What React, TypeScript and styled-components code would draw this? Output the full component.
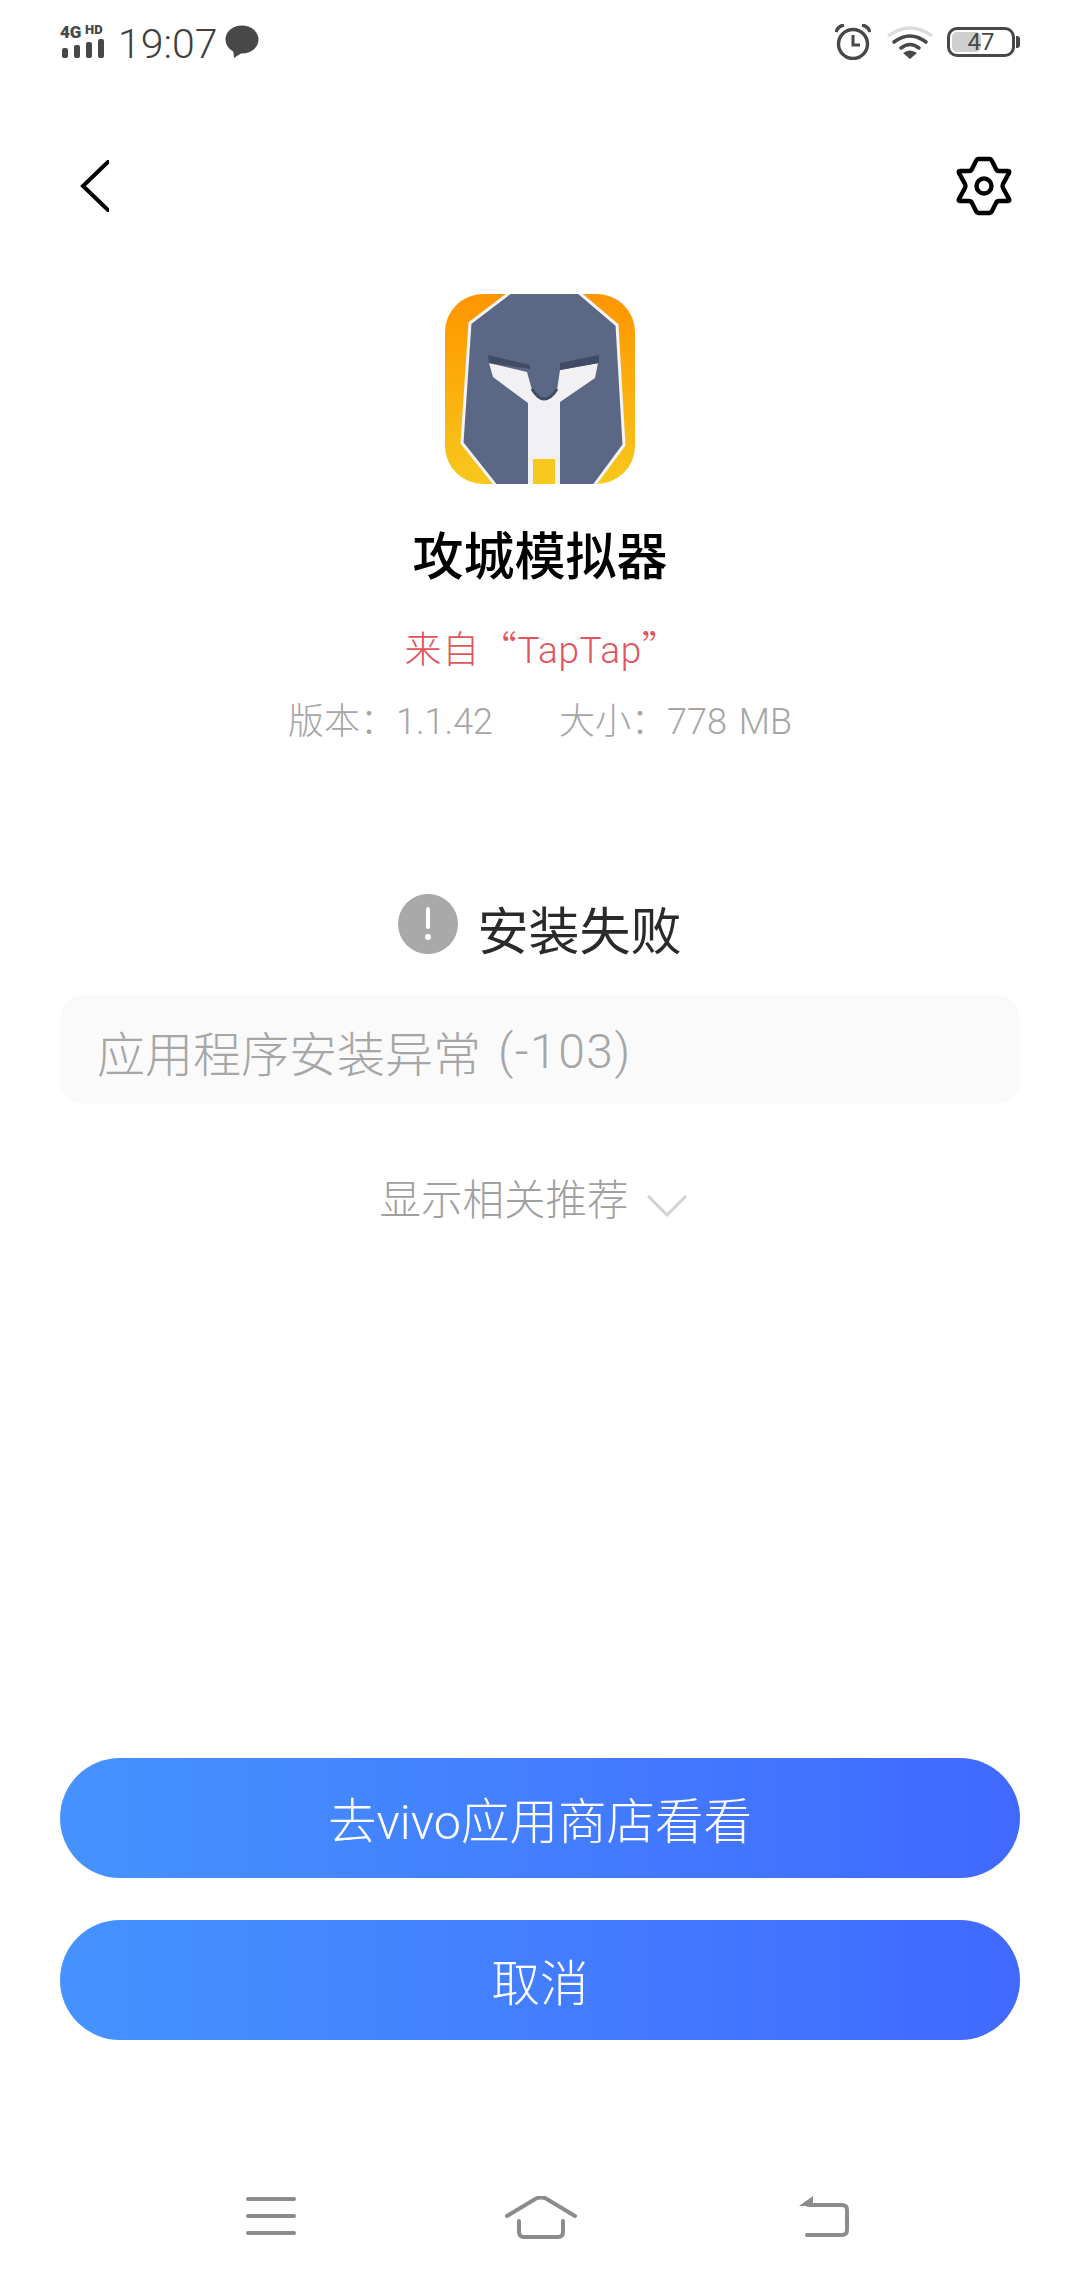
import React from 'react';
import styled, { createGlobalStyle } from 'styled-components';

const GlobalStyle = createGlobalStyle`
  html, body {
    margin: 0;
    padding: 0;
    background: #fff;
  }
  * {
    box-sizing: border-box;
  }
`;

const FONT = `"Roboto", "Noto Sans CJK SC", sans-serif`;

const Page = styled.div`
  width: 1080px;
  height: 2280px;
  display: flex;
  flex-direction: column;
  font-family: ${FONT};
  background: #fff;
  overflow: hidden;
`;

const StatusBar = styled.div`
  height: 84px;
  padding: 22px 60px 0;
  display: flex;
  justify-content: space-between;
  align-items: flex-start;
`;

const StatusLeft = styled.div`
  display: flex;
  align-items: center;
  height: 40px;
`;

const StatusRight = styled.div`
  display: flex;
  align-items: center;
  height: 40px;
  gap: 14px;
`;

const Clock = styled.span`
  font-size: 41px;
  font-weight: 300;
  line-height: 40px;
  color: #404040;
  margin: 4px 7px 0 8px;
`;

const BatteryBox = styled.div`
  position: relative;
  width: 68px;
  height: 30px;
  border: 3px solid #484848;
  border-radius: 10px;
  display: flex;
  align-items: center;
  justify-content: center;
  font-size: 24px;
  color: #484848;
  overflow: hidden;
`;

const BatteryFill = styled.div`
  position: absolute;
  left: 2px;
  top: 2px;
  bottom: 2px;
  background: #cfcfcf;
  border-radius: 5px;
`;

const BatteryText = styled.span`
  position: relative;
  line-height: 24px;
`;

const BatteryTip = styled.div`
  width: 4px;
  height: 12px;
  background: #484848;
  border-radius: 0 3px 3px 0;
  margin-left: 1px;
`;

const Battery = styled.div`
  display: flex;
  align-items: center;
`;

const AlarmIcon = styled.svg`
  width: 36px;
  height: 36px;
  margin-right: 2px;
`;

const TopBar = styled.div`
  height: 90px;
  margin-top: 57px;
  padding: 0 67px 0 79px;
  display: flex;
  justify-content: space-between;
  align-items: center;
`;

const Main = styled.div`
  display: flex;
  flex-direction: column;
  align-items: center;
`;

const AppIcon = styled.svg`
  display: block;
  width: 190px;
  height: 190px;
  margin-top: 63px;
  margin-right: 1px;
`;

const AppName = styled.h1`
  margin: 42px 0 0;
  font-size: 51px;
  line-height: 64px;
  font-weight: 500;
  color: #000;
`;

const Source = styled.div`
  margin-top: 34px;
  margin-left: 4px;
  font-size: 37px;
  font-weight: 300;
  line-height: 46px;
  letter-spacing: 0.6px;
  color: #e0555c;
`;

const Quote = styled.span`
  font-family: "Noto Sans CJK SC", sans-serif;
`;

const Meta = styled.div`
  margin-top: 25px;
  display: flex;
  gap: 66px;
  font-size: 36px;
  font-weight: 300;
  line-height: 46px;
  word-spacing: 3px;
  color: #a6a6a6;
`;

const ResultRow = styled.div`
  margin-top: 156px;
  display: flex;
  align-items: center;
  gap: 19px;
  height: 64px;
`;

const ResultIcon = styled.svg`
  width: 60px;
  height: 60px;
  margin-top: -18px;
`;

const ResultText = styled.div`
  font-size: 51px;
  line-height: 64px;
  font-weight: 400;
  color: #2a2a2a;
`;

const ErrorBox = styled.div`
  width: 960px;
  height: 109px;
  margin-top: 30px;
  padding: 3px 37px 0;
  display: flex;
  align-items: center;
  background: #fafafa;
  border-radius: 24px;
  font-size: 48px;
  font-weight: 300;
  color: #a6a6a6;
`;

const ErrorCode = styled.span`
  margin-left: 17px;
  letter-spacing: 1.5px;
`;

const MoreRow = styled.div`
  margin-top: 70px;
  margin-right: 14px;
  display: flex;
  align-items: center;
  gap: 18px;
  font-size: 41.5px;
  font-weight: 300;
  line-height: 54px;
  color: #a0a0a0;
`;

const MoreChevron = styled.svg`
  width: 40px;
  height: 22px;
  margin-top: 10px;
`;

const Actions = styled.div`
  margin-top: auto;
  padding: 0 60px;
  display: flex;
  flex-direction: column;
  gap: 42px;
`;

const ActionButton = styled.button`
  height: 120px;
  width: 100%;
  border: none;
  border-radius: 60px;
  background: linear-gradient(90deg, #4593ff, #4169ff);
  color: #fff;
  font-family: ${FONT};
  font-size: 48.5px;
  font-weight: 300;
  padding: 0;
`;

const NavBar = styled.div`
  height: 240px;
  padding: 156px 230px 0 246px;
  display: flex;
  justify-content: space-between;
  align-items: flex-start;
`;

const HomeIcon = styled.svg`
  width: 72px;
  height: 44px;
  margin-right: 12px;
`;

const Back = () => (
  <svg width="30" height="52" viewBox="0 0 30 52" fill="none">
    <path d="M29 2 L4 26 L29 50" stroke="#000" strokeWidth="4" strokeLinecap="round" strokeLinejoin="miter" />
  </svg>
);

const Gear = () => (
  <svg width="58" height="60" viewBox="0 0 58 60" fill="none" stroke="#000" strokeWidth="4.4">
    <path d="M23 3 H35 Q36 3 37 5 L41 13 Q42 15 44 15 L53 15 Q55 15 54 17 L48 28 Q47 30 48 32 L54 43 Q55 45 53 45 H44 Q42 45 41 47 L37 55 Q36 57 35 57 H23 Q22 57 21 55 L17 47 Q16 45 14 45 H5 Q3 45 4 43 L10 32 Q11 30 10 28 L4 17 Q3 15 5 15 H14 Q16 15 17 13 L21 5 Q22 3 23 3 Z" />
    <circle cx="29" cy="30" r="7.5" />
  </svg>
);

const Signal = () => (
  <svg width="50" height="42" viewBox="0 0 50 42">
    <text x="0" y="17" fontFamily="Roboto" fontWeight="900" fontSize="17" fill="#484848">4G</text>
    <text x="25" y="12.5" fontFamily="Roboto" fontWeight="900" fontSize="13" fill="#484848">HD</text>
    <rect x="2" y="27" width="6" height="10" rx="2" fill="#484848" />
    <rect x="14" y="24" width="6" height="13" rx="2" fill="#484848" />
    <rect x="26" y="21" width="6" height="16" rx="2" fill="#484848" />
    <rect x="38" y="18" width="6" height="19" rx="2" fill="#484848" />
  </svg>
);

const Bubble = () => (
  <svg width="34" height="34" viewBox="0 0 34 34">
    <ellipse cx="17" cy="14.5" rx="16.5" ry="14" fill="#484848" />
    <path d="M8 24 L9 33 L18 27 Z" fill="#484848" />
  </svg>
);

const Alarm = () => (
  <AlarmIcon viewBox="0 0 36 36" fill="none">
    <circle cx="18" cy="20" r="14.5" stroke="#484848" strokeWidth="3.4" />
    <path d="M18 11 V21 H25" stroke="#484848" strokeWidth="3" />
    <path d="M1 8 Q3 2 9 1" stroke="#484848" strokeWidth="3.4" />
    <path d="M35 8 Q33 2 27 1" stroke="#484848" strokeWidth="3.4" />
  </AlarmIcon>
);

const Wifi = () => (
  <svg width="46" height="34" viewBox="0 0 46 34" fill="none">
    <path d="M1 11 Q23 -5 45 11" stroke="#dcdcdc" strokeWidth="3.4" />
    <path d="M7 17 Q23 5 39 17" stroke="#484848" strokeWidth="3.6" strokeLinecap="round" />
    <path d="M14 23 Q23 16 32 23" stroke="#484848" strokeWidth="3.6" strokeLinecap="round" />
    <path d="M16 28 Q23 23 30 28 L23 34 Z" fill="#484848" />
  </svg>
);

const Helmet = () => (
  <AppIcon viewBox="0 0 190 190">
    <defs>
      <linearGradient id="iconBg" x1="0" y1="0" x2="0" y2="1">
        <stop offset="0" stopColor="#ff9500" />
        <stop offset="1" stopColor="#f7c81c" />
      </linearGradient>
      <clipPath id="iconClip">
        <rect width="190" height="190" rx="38" />
      </clipPath>
    </defs>
    <g clipPath="url(#iconClip)">
      <rect width="190" height="190" fill="url(#iconBg)" />
      <path d="M67 -3 L25 29 L17 149 L52 193 H148 L179 151 L172 31 L132 -3 Z" fill="#5b6885" stroke="#f4f4f6" strokeWidth="3" />
      <path d="M44 69 L82 78 L87 96 Q93 106 99 106 Q106 106 112 96 L115 76 L153 69 L150 84 L115 108 V190 H83 V109 L48 83 Z" fill="#f1f1f3" />
      <path d="M43 61 L85 71 V75 L44 69 Z" fill="#414c64" />
      <path d="M154 61 L115 69 V76 L154 69 Z" fill="#414c64" />
      <path d="M87 95 Q93 105 99 105 Q106 105 112 95" fill="none" stroke="#414c64" strokeWidth="3" />
      <rect x="88" y="165" width="22" height="25" fill="#f7c81c" />
    </g>
  </AppIcon>
);

const Warning = () => (
  <ResultIcon viewBox="0 0 60 60">
    <circle cx="30" cy="30" r="30" fill="#a9a9a9" />
    <rect x="28" y="13" width="4" height="22" rx="2" fill="#fff" />
    <circle cx="30" cy="43" r="3" fill="#fff" />
  </ResultIcon>
);

const Chevron = () => (
  <MoreChevron viewBox="0 0 40 22" fill="none">
    <path d="M1 1 L20 20 L39 1" stroke="#d2d2d2" strokeWidth="3" />
  </MoreChevron>
);

const NavMenu = () => (
  <svg width="50" height="40" viewBox="0 0 50 40" stroke="#8c8c8c" strokeWidth="4" strokeLinecap="round">
    <path d="M2 3 H48 M2 20 H48 M2 37 H48" />
  </svg>
);

const NavHome = () => (
  <HomeIcon viewBox="0 0 72 44" fill="none" stroke="#8c8c8c" strokeWidth="4" strokeLinecap="round">
    <path d="M2 20 L31 2.5 Q36 0.5 41 2.5 L70 20" />
    <path d="M14 25 V36 Q14 41 19 41 H53 Q58 41 58 36 V25" />
  </HomeIcon>
);

const NavReturn = () => (
  <svg width="52" height="42" viewBox="0 0 52 42" fill="none">
    <path d="M1 10 L15 0 V10 Z" fill="#8c8c8c" />
    <path d="M10 9 H44 Q49 9 49 14 V34 Q49 39 44 39 H9" stroke="#8c8c8c" strokeWidth="4" strokeLinecap="round" />
  </svg>
);

const App = () => {
  return (
    <Page>
      <GlobalStyle />
      <StatusBar>
        <StatusLeft>
          <Signal />
          <Clock>19:07</Clock>
          <Bubble />
        </StatusLeft>
        <StatusRight>
          <Alarm />
          <Wifi />
          <Battery>
            <BatteryBox>
              <BatteryFill style={{ width: `${47 * 0.62}px` }} />
              <BatteryText>47</BatteryText>
            </BatteryBox>
            <BatteryTip />
          </Battery>
        </StatusRight>
      </StatusBar>
      <TopBar>
        <Back />
        <Gear />
      </TopBar>
      <Main>
        <Helmet />
        <AppName>攻城模拟器</AppName>
        <Source>
          来自<Quote>“</Quote>TapTap<Quote>”</Quote>
        </Source>
        <Meta>
          <span>版本：1.1.42</span>
          <span>大小：778 MB</span>
        </Meta>
        <ResultRow>
          <Warning />
          <ResultText>安装失败</ResultText>
        </ResultRow>
        <ErrorBox>
          应用程序安装异常<ErrorCode>(-103)</ErrorCode>
        </ErrorBox>
        <MoreRow>
          显示相关推荐
          <Chevron />
        </MoreRow>
      </Main>
      <Actions>
        <ActionButton>去vivo应用商店看看</ActionButton>
        <ActionButton>取消</ActionButton>
      </Actions>
      <NavBar>
        <NavMenu />
        <NavHome />
        <NavReturn />
      </NavBar>
    </Page>
  );
};

export default App;
